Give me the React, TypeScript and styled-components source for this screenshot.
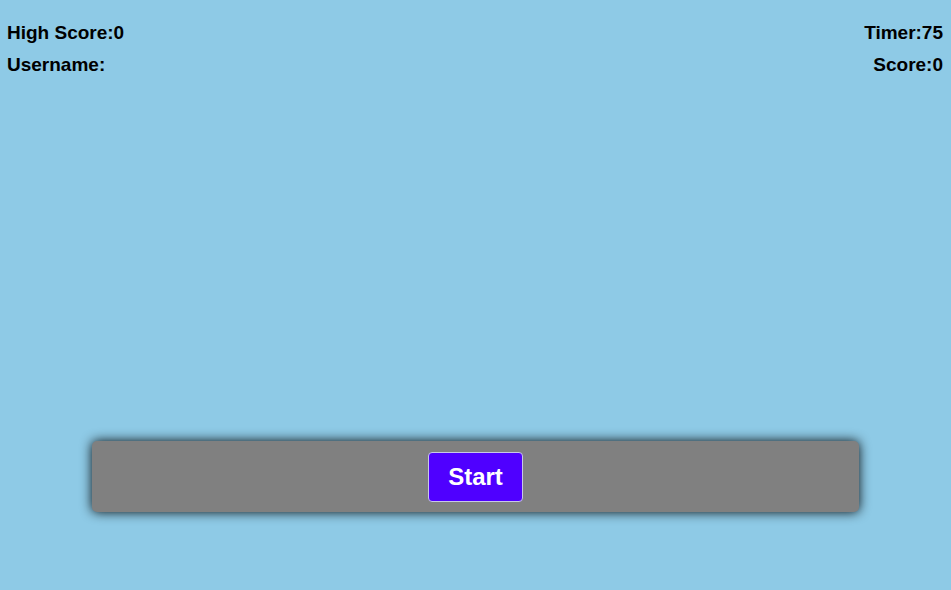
import React from "react";
import styled, { createGlobalStyle } from "styled-components";

const Global = createGlobalStyle`
  html, body { margin: 0; padding: 0; }
  body {
    background: #8ecae6;
    font-family: "Liberation Sans", Arial, sans-serif;
  }
`;

const Page = styled.div`
  height: 590px;
  display: flex;
  flex-direction: column;
  background: #8ecae6;
`;

const Header = styled.header`
  display: flex;
  justify-content: space-between;
  padding: 22px 8px 0 7px;
`;

const Column = styled.div<{ $align: "left" | "right" }>`
  display: flex;
  flex-direction: column;
  gap: 10px;
  text-align: ${(p) => p.$align};
`;

const Stat = styled.div`
  font-size: 19px;
  font-weight: bold;
  line-height: 22px;
  color: #000;
`;

const Spacer = styled.div`
  flex: 1;
`;

const Controls = styled.div`
  width: 767px;
  height: 71px;
  margin: 0 auto 78px;
  box-sizing: border-box;
  background: #808080;
  border-radius: 5px;
  box-shadow: 0 0 12px rgba(0, 0, 0, 0.95);
  display: flex;
  align-items: center;
  justify-content: center;
`;

const StartButton = styled.button`
  width: 95px;
  height: 50px;
  box-sizing: border-box;
  background: #4f00ff;
  color: #fff;
  border: 1px solid #c8c8e8;
  border-radius: 4px;
  font-family: "Liberation Sans", Arial, sans-serif;
  font-size: 24px;
  font-weight: bold;
  cursor: pointer;
  padding: 0;
`;

export default function App() {
  return (
    <>
      <Global />
      <Page>
        <Header>
          <Column $align="left">
            <Stat>High Score:0</Stat>
            <Stat>Username:</Stat>
          </Column>
          <Column $align="right">
            <Stat>Timer:75</Stat>
            <Stat>Score:0</Stat>
          </Column>
        </Header>
        <Spacer />
        <Controls>
          <StartButton>Start</StartButton>
        </Controls>
      </Page>
    </>
  );
}
